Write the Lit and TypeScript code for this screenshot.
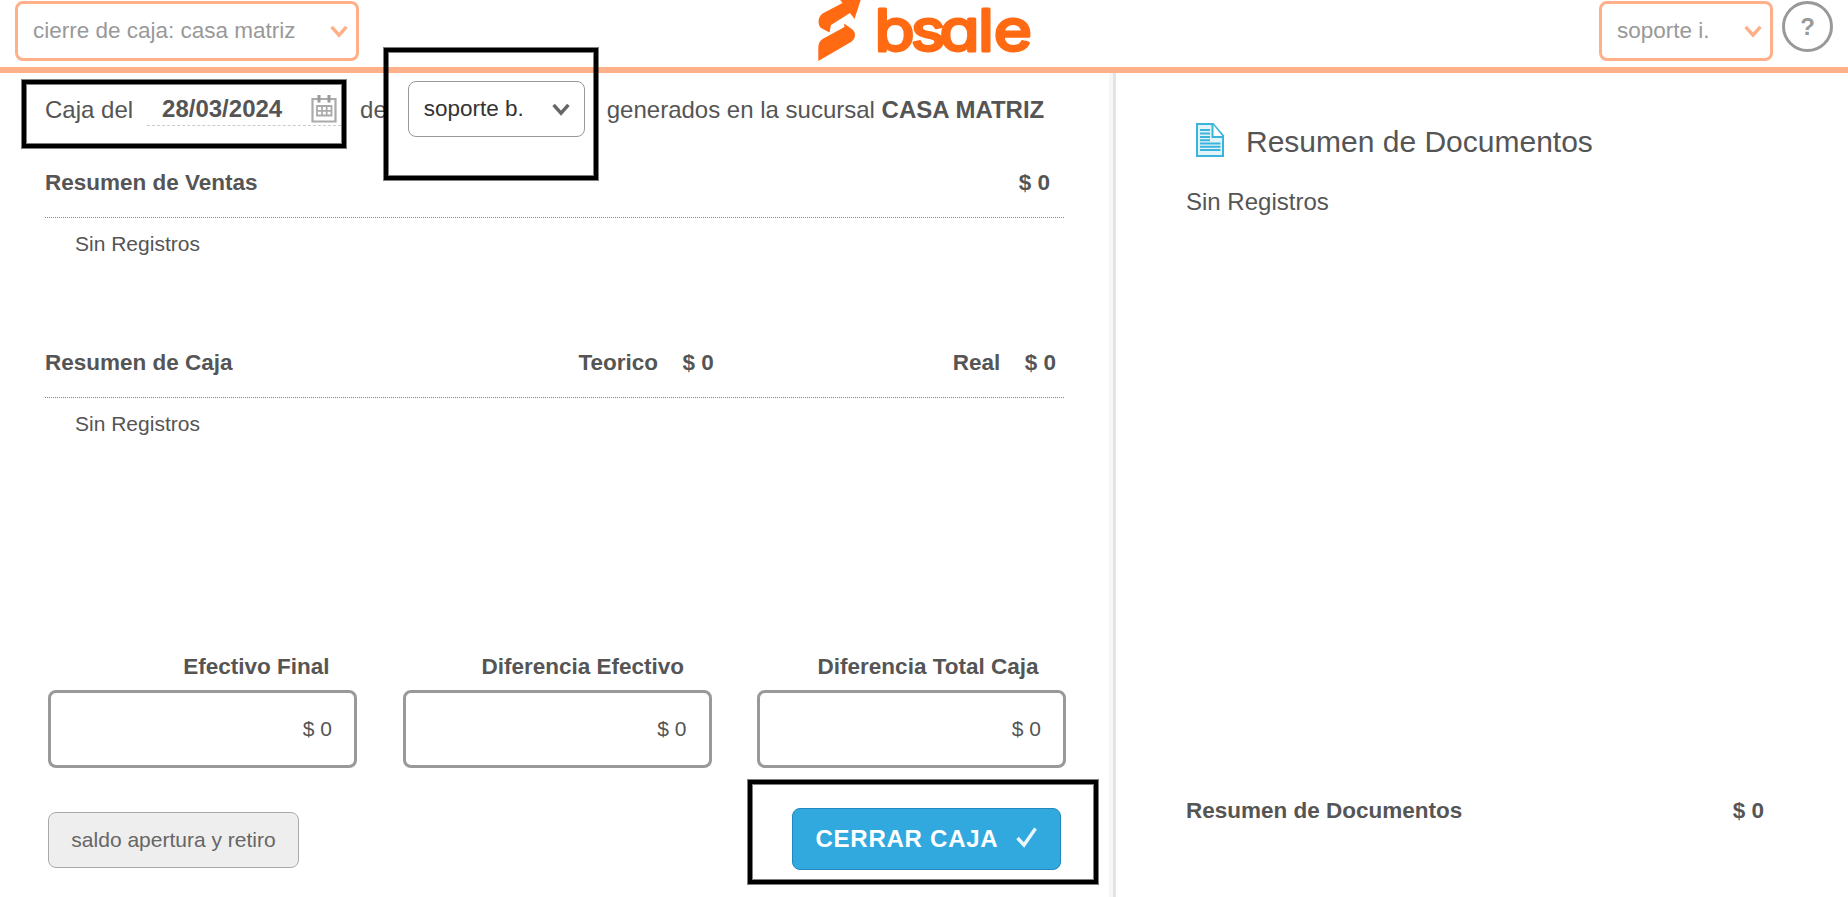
import { LitElement, html, css } from 'lit'
import { customElement, property } from 'lit/decorators.js'

@customElement('chevron-icon')
export class ChevronIcon extends LitElement {
  static styles = css`
    :host { display: block; width: 18px; height: 13px; }
    svg { display: block; }
  `

  render() {
    return html`
      <svg width="18" height="13" viewBox="0 0 18 13" fill="none" stroke="currentColor" stroke-width="3.4">
        <path d="M1.6 1.8 9 10.2 16.4 1.8" />
      </svg>
    `
  }
}

@customElement('select-box')
export class SelectBox extends LitElement {
  @property() label = ''

  static styles = css`
    :host {
      box-sizing: border-box;
      display: flex;
      align-items: center;
      justify-content: space-between;
      height: 60px;
      padding: 0 8px 0 15px;
      border: 3px solid #ffb088;
      border-radius: 8px;
      color: #999;
      font-size: 22.5px;
      white-space: nowrap;
    }

    .label { padding-bottom: 1px; }
    chevron-icon { color: #ffb088; }

    :host([plain]) {
      height: 56px;
      padding: 0 14px 0 15px;
      border: 1px solid #999;
      color: #333;
    }
    :host([plain]) chevron-icon { color: #666; }
  `

  render() {
    return html`<span class="label">${this.label}</span><chevron-icon></chevron-icon>`
  }
}

@customElement('app-root')
export class AppRoot extends LitElement {
  static styles = css`
    :host {
      position: relative;
      display: flex;
      flex-direction: column;
      height: 897px;
      overflow: hidden;
      background: #fff;
      color: #555;
      font-family: 'Liberation Sans', Arial, sans-serif;
      font-size: 22.5px;
    }

    svg { display: block; }

    header {
      box-sizing: border-box;
      height: 73px;
      flex: none;
      display: grid;
      grid-template-columns: 1fr auto 1fr;
      align-items: start;
      padding: 1px 15px 0;
      border-bottom: 6px solid #ffb088;
    }

    .branch { width: 344px; }
    .logo { margin-top: -1px; overflow: visible; }
    .word {
      font-family: Inter, sans-serif;
      font-size: 58px;
      font-weight: 400;
      font-feature-settings: 'cv11';
      stroke: #ff6a13;
      stroke-width: 3px;
      stroke-linejoin: round;
    }
    .account { display: flex; justify-content: flex-end; gap: 9px; }
    .user { width: 174px; }

    .help {
      box-sizing: border-box;
      width: 51px;
      height: 51px;
      border: 3px solid #999;
      border-radius: 50%;
      color: #999;
      font-size: 24px;
      font-weight: 700;
      line-height: 45px;
      text-align: center;
    }

    .page { flex: 1; display: flex; min-height: 0; }

    .cash {
      box-sizing: border-box;
      width: 1109px;
      display: flex;
      flex-direction: column;
      padding: 8px 45px 27px;
    }

    .filters {
      display: flex;
      align-items: center;
      height: 56px;
      margin-bottom: 10px;
      font-size: 24px;
      white-space: nowrap;
    }
    .filters .text { padding-top: 1px; }

    .date {
      box-sizing: border-box;
      display: flex;
      align-items: center;
      justify-content: space-between;
      width: 194px;
      height: 34px;
      margin: 0 19px 0 14px;
      padding: 0 4px 0 15px;
      border-bottom: 1px dashed #ccc;
      font-weight: 700;
    }

    .seller { width: 177px; margin: 0 22px 0 21px; }

    .summary { height: 180px; flex: none; }
    .summary-head {
      box-sizing: border-box;
      display: grid;
      grid-template-columns: 533.5px 1fr auto;
      align-items: center;
      height: 71px;
      padding-top: 1px;
      border-bottom: 1px dotted #31a9c9;
      font-weight: 700;
    }
    .pair { display: flex; gap: 24.5px; padding-right: 8px; }
    .total { grid-column: 3; padding-right: 14px; }
    .empty { padding-left: 30px; font-size: 21px; line-height: 51px; }

    .results {
      display: grid;
      grid-template-columns: repeat(3, 309px);
      justify-content: space-between;
      margin: auto -2px 0 3px;
    }
    .result-label {
      padding-right: 27.5px;
      font-weight: 700;
      line-height: 30px;
      text-align: right;
    }
    .result-value {
      box-sizing: border-box;
      height: 78px;
      margin-top: 8px;
      padding-right: 22px;
      border: 3px solid #999;
      border-radius: 8px;
      font-size: 21px;
      line-height: 71px;
      text-align: right;
    }

    .actions {
      display: flex;
      align-items: center;
      justify-content: space-between;
      height: 62px;
      margin: 40px 3px 0;
    }

    button {
      box-sizing: border-box;
      border-radius: 8px;
      font-family: inherit;
      white-space: nowrap;
    }
    .balance {
      width: 251px;
      height: 56px;
      margin-top: 2px;
      padding: 0;
      border: 1px solid #aaa;
      background: #eee;
      color: #666;
      font-size: 21px;
    }
    .close {
      display: flex;
      align-items: center;
      justify-content: space-between;
      width: 269px;
      height: 62px;
      padding: 0 23px 0 22.5px;
      border: 1px solid #2188bd;
      background: #31a9df;
      color: #fff;
      font-size: 24px;
      font-weight: 700;
      letter-spacing: 0.75px;
    }
    .close svg { margin-bottom: 3px; }

    .documents {
      box-sizing: border-box;
      flex: 1;
      display: flex;
      flex-direction: column;
      padding: 50px 84px 63px 70px;
      border-left: 3px solid #e3e4e6;
      box-shadow: -4px 0 #f5f6f8;
      margin-left: 4px;
    }
    .documents-title {
      display: flex;
      align-items: center;
      gap: 21px;
      padding-left: 9px;
      font-size: 30px;
      line-height: 36px;
    }
    .documents-title svg { margin-bottom: 3px; }
    .documents-title span { padding-top: 1px; }
    .documents-empty { margin-top: 26px; font-size: 24px; line-height: 32px; }
    .documents-total {
      display: flex;
      justify-content: space-between;
      margin-top: auto;
      font-weight: 700;
      line-height: 46px;
    }

    /* highlighted areas of the guide, drawn over the page */
    .mark {
      position: absolute;
      box-sizing: border-box;
      border: 4px solid #000;
      box-shadow: 0 0 0 1px rgba(0, 0, 0, 0.5), inset 0 0 0 1px rgba(0, 0, 0, 0.5);
      pointer-events: none;
    }
    .mark-date { left: 22px; top: 80px; width: 324px; height: 68px; }
    .mark-seller { left: 384px; top: 48px; width: 214px; height: 132px; }
    .mark-close { left: 748px; top: 780px; width: 350px; height: 104px; }
  `

  private results = ['Efectivo Final', 'Diferencia Efectivo', 'Diferencia Total Caja']

  private _logo() {
    return html`
      <svg class="logo" width="212" height="62" viewBox="0 0 212 62" fill="#ff6a13">
        <path d="M24.500 3 21.500 -1H43L36.500 19 32 13 13 25 11.500 32.500 3 28C-.5 25 -.5 17 4.500 13.500Z" />
        <path d="M26 23.500 34.500 29.500C38.500 33 37.500 39 33 42L.3 61V48C.3 44 1.500 41 4.500 39L26.500 27Z" />
        <text class="word" x="50 82 107.5 141.7 155.5" y="51" transform="scale(1.13 1)">bsale</text>
      </svg>
    `
  }

  private _calendar() {
    return html`
      <svg width="26" height="30" viewBox="0 0 26 30" fill="none" stroke="#aaa">
        <path d="M1.500 5H24.500V27.500H1.500Z" stroke-width="2.200" />
        <path d="M8 1V8.500M18 1V8.500" stroke="#999" stroke-width="3" />
        <path d="M6 12H20.500V21.500H6ZM6 16.800H20.500M11 12V21.500M15.700 12V21.500" stroke-width="1.800" />
      </svg>
    `
  }

  private _document() {
    return html`
      <svg width="30" height="34" viewBox="0 0 30 34" fill="none" stroke="#3ab4da">
        <path d="M2 1H18L28 12.500V33H2Z" fill="#e2f4fa" stroke-width="2" />
        <path d="M17.500 1V14H28" fill="#fff" stroke-width="2" />
        <path d="M5 7H15M5 10.500H15M5 14H15M5 17.300H15M5 20.500H25.500M5 23.800H25.500M5 27.100H25.500" stroke-width="2" />
      </svg>
    `
  }

  render() {
    return html`
      <header>
        <select-box class="branch" label="cierre de caja: casa matriz"></select-box>
        ${this._logo()}
        <div class="account">
          <select-box class="user" label="soporte i."></select-box>
          <div class="help">?</div>
        </div>
      </header>

      <div class="page">
        <main class="cash">
          <div class="filters">
            <span class="text">Caja del</span>
            <div class="date"><span>28/03/2024</span>${this._calendar()}</div>
            <span class="text">de</span>
            <select-box class="seller" plain label="soporte b."></select-box>
            <span class="text">generados en la sucursal <b>CASA MATRIZ</b></span>
          </div>

          <section class="summary">
            <div class="summary-head">
              <span>Resumen de Ventas</span>
              <span class="total">$ 0</span>
            </div>
            <div class="empty">Sin Registros</div>
          </section>

          <section class="summary">
            <div class="summary-head">
              <span>Resumen de Caja</span>
              <span class="pair"><span>Teorico</span><span>$ 0</span></span>
              <span class="pair"><span>Real</span><span>$ 0</span></span>
            </div>
            <div class="empty">Sin Registros</div>
          </section>

          <div class="results">
            ${this.results.map(
              (label) => html`
                <div>
                  <div class="result-label">${label}</div>
                  <div class="result-value">$ 0</div>
                </div>
              `
            )}
          </div>

          <div class="actions">
            <button class="balance">saldo apertura y retiro</button>
            <button class="close">
              CERRAR CAJA
              <svg width="21" height="21" viewBox="0 0 21 21" fill="none" stroke="#e9f6fc" stroke-width="3.400">
                <path d="M1.500 11 8 18 19.500 1.500" />
              </svg>
            </button>
          </div>
        </main>

        <aside class="documents">
          <div class="documents-title">${this._document()}<span>Resumen de Documentos</span></div>
          <div class="documents-empty">Sin Registros</div>
          <div class="documents-total"><span>Resumen de Documentos</span><span>$ 0</span></div>
        </aside>
      </div>

      <div class="mark mark-date"></div>
      <div class="mark mark-seller"></div>
      <div class="mark mark-close"></div>
    `
  }
}
